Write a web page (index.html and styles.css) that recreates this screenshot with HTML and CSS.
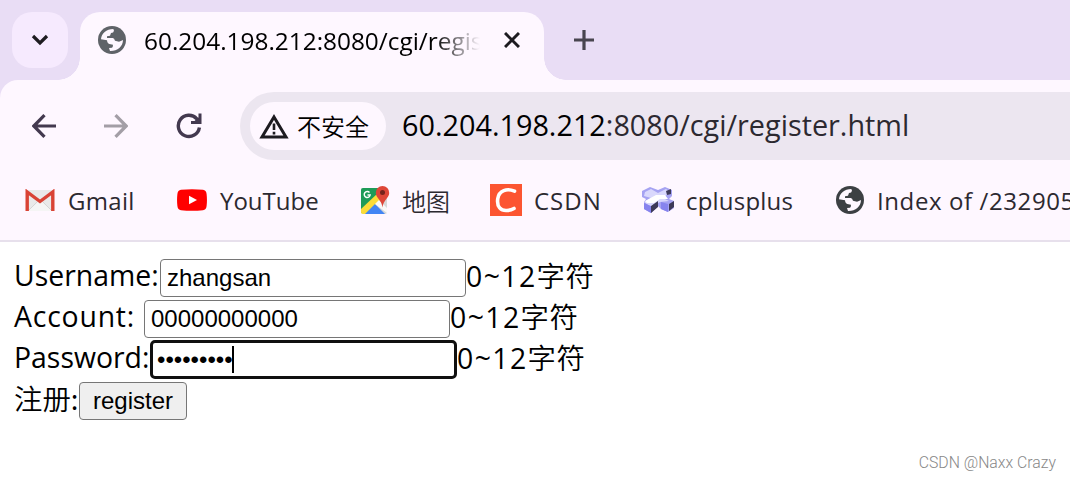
FILE: index.html
```html
<!DOCTYPE html>
<html lang="zh-CN">
<head>
    <meta charset="UTF-8">
    <title>60.204.198.212:8080/cgi/register.html</title>
    <link rel="stylesheet" href="styles.css">
</head>
<body>
    <div class="tab-strip">
        <div class="tab-search">
            <svg width="18" height="12" viewBox="0 0 18 12"><path d="M2 2l7 7 7-7" fill="none" stroke="#1d1b20" stroke-width="3.2"/></svg>
        </div>
        <div class="tab">
            <svg class="globe" width="28" height="28" viewBox="0 0 84 84"><circle cx="42" cy="42" r="42" fill="#5f6368"/><path d="M9 40C10 23 25 9 46 9L48 14Q47 21 39 21L36 29L27 31V36H44Q49 37 51 44L63 47Q68 46 75 42C75 62 57 76 36 75L33 66L42 65Q45 63 45 56L34 54Q28 53 27 43Z" fill="#fef7ff"/></svg>
            <span class="tab-title">60.204.198.212:8080/cgi/regis</span>
            <svg class="tab-close" width="16" height="16" viewBox="0 0 16 16"><path d="M1 1l14 14M15 1L1 15" stroke="#1d1b20" stroke-width="3"/></svg>
        </div>
        <svg class="new-tab" width="20" height="20" viewBox="0 0 20 20"><path d="M10 0v20M0 10h20" stroke="#49454f" stroke-width="3.2"/></svg>
    </div>

    <div class="toolbar">
        <svg class="nav-icon" width="24" height="24" viewBox="0 0 24 24"><path d="M24 12H2M12.5 1.2L1.8 12l10.7 10.8" fill="none" stroke="#43394f" stroke-width="3.2"/></svg>
        <svg class="nav-icon" width="24" height="24" viewBox="0 0 24 24"><path d="M0 12h22M11.5 1.2L22.2 12 11.5 22.8" fill="none" stroke="#a39ea6" stroke-width="3.2"/></svg>
        <svg class="nav-icon" width="26" height="26" viewBox="0 0 26 26"><path d="M23.4 14.5A10.6 10.6 0 1 1 20.8 5.8L22 7" fill="none" stroke="#43394f" stroke-width="3.4"/><path d="M22.500 .5H25.500V11H15V8H18.500L22.500 4.500Z" fill="#43394f"/></svg>
        <div class="address">
            <div class="security">
                <svg width="30" height="25" viewBox="0 0 30 25"><path d="M15 3L27 23H3Z" fill="none" stroke="#1d1b20" stroke-width="3"/><path d="M15 9.5v6.5M15 17.8v2.8" stroke="#1d1b20" stroke-width="2.6"/></svg>
                <span>不安全</span>
            </div>
            <span class="url">60.204.198.212<span class="path">:8080/cgi/register.html</span></span>
        </div>
    </div>

    <div class="bookmarks">
        <div class="bookmark gmail">
            <svg width="30" height="23" viewBox="0 0 30 23"><rect x="2" y="1" width="27" height="21" rx="1.5" fill="#e9e9e9"/><path d="M3 22L15 11l12 11z" fill="#f5f5f5"/><path d="M3 22l9-9M27 22l-9-9" stroke="#ccc" stroke-width=".7"/><path d="M2.2 22V3L15 12.5 27.8 3v19" fill="none" stroke="#d94335" stroke-width="3.4"/></svg>
            <span>Gmail</span>
        </div>
        <div class="bookmark youtube">
            <svg width="30" height="22" viewBox="0 0 30 22"><path d="M4 .8Q15-.4 26 .8Q29.2 1.3 29.6 5Q30.3 11 29.6 17Q29.2 20.7 26 21.2Q15 22.4 4 21.2Q.8 20.7.4 17Q-.3 11 .4 5Q.8 1.3 4 .8Z" fill="#f00"/><path d="M12 6.7l8 4.3-8 4.3z" fill="#fff"/></svg>
            <span>YouTube</span>
        </div>
        <div class="bookmark maps">
            <svg width="30" height="30" viewBox="0 0 30 30"><rect x="1" y="3" width="26" height="26" rx="2" fill="#d7d7d7"/><path d="M3 3h17L16 15 1 28V5q0-2 2-2z" fill="#1e9b58"/><path d="M1 24L18 8l5 6L6 29H3q-2 0-2-2z" fill="#fbdc38"/><path d="M5 29L15 19l10 10z" fill="#4285f4"/><path d="M15 19l4-4 8 8v5z" fill="#f8f8f8"/><path d="M22.5 1a6.7 6.7 0 0 1 6.7 7c0 5-6 7-6.7 14.5C21.8 15 15.8 13 15.8 8a6.7 6.7 0 0 1 6.7-7z" fill="#de4638"/><circle cx="22.5" cy="7.5" r="2.5" fill="#75231c"/><path d="M9.5 7.5A3 3 0 1 0 10.2 10H7.5" fill="none" stroke="#fff" stroke-width="1.4"/></svg>
            <span>地图</span>
        </div>
        <div class="bookmark csdn">
            <svg width="32" height="32" viewBox="0 0 32 32"><path d="M0 0h32v32H0z" fill="#fc5531"/><path d="M24.5 7.2C17 3.8 9 6.5 7.8 14.5C6.5 23 11 27 17 26.5Q21 26.300 24 24.5" fill="none" stroke="#fff" stroke-width="3.6" stroke-linecap="round"/></svg>
            <span>CSDN</span>
        </div>
        <div class="bookmark cplusplus">
            <svg width="32" height="26" viewBox="0 0 32 26"><path d="M0 4L8 0L16 3L23 0L30 3V9L27 12L32 14V21L26 25L19 22L16 19L9 26L2 22V15L4 12L0 10Z" fill="#a5a2f2"/><path d="M3 5L9 2L16 6L24 2L28 5L21 11L27 14L18 15L9 20L2 15L9 11L2 9Z" fill="#d9d8fc"/><path d="M3 14L14 8H23L26 12H18L12 16H5Z" fill="#fff"/><path d="M2 16L9 19V26L2 22ZM19 15L26 17V25L19 22Z" fill="#8784ee"/><path d="M9 19L16 14V20L9 26ZM27 17L32 14V20L27 24ZM24 4L29 2V7L25 8Z" fill="#3d3a58"/></svg>
            <span>cplusplus</span>
        </div>
        <div class="bookmark index">
            <svg width="28" height="28" viewBox="0 0 84 84"><circle cx="42" cy="42" r="42" fill="#3c4043"/><path d="M9 40C10 23 25 9 46 9L48 14Q47 21 39 21L36 29L27 31V36H44Q49 37 51 44L63 47Q68 46 75 42C75 62 57 76 36 75L33 66L42 65Q45 63 45 56L34 54Q28 53 27 43Z" fill="#fef7ff"/></svg>
            <span>Index of /232905</span>
        </div>
    </div>

    <div class="page">
        <div class="row">
            <label class="label-username">Username:</label>
            <input class="field" type="text" value="zhangsan">
            <span class="hint">0~12<span class="cjk">字符</span></span>
        </div>
        <div class="row">
            <label class="label-account">Account:</label>
            <input class="field" type="text" value="00000000000">
            <span class="hint">0~12<span class="cjk">字符</span></span>
        </div>
        <div class="row">
            <label class="label-password">Password:</label>
            <div class="field focused">•••••••••<span class="caret"></span></div>
            <span class="hint">0~12<span class="cjk">字符</span></span>
        </div>
        <div class="row">
            <label class="label-register">注册:</label>
            <button class="register">register</button>
        </div>
        <div class="watermark">CSDN @Naxx Crazy</div>
    </div>
</body>
</html>
```
FILE: styles.css
```css
* {
    box-sizing: border-box;
}
body {
    margin: 0;
    width: 1070px;
    height: 480px;
    overflow: hidden;
    background-color: #e9ddf5;
    font-family: "Open Sans", "Noto Sans CJK SC", sans-serif;
    white-space: nowrap;
}
svg {
    display: block;
    flex-shrink: 0;
}
/* tabs */
.tab-strip {
    display: flex;
    height: 80px;
    padding: 12px 12px 0;
}
.tab-search {
    display: flex;
    align-items: center;
    justify-content: center;
    width: 56px;
    height: 56px;
    border-radius: 20px;
    background-color: #f6eafe;
}
.tab {
    position: relative;
    display: flex;
    align-items: center;
    width: 464px;
    height: 68px;
    margin-left: 12px;
    padding: 0 24px 12px 18px;
    border-radius: 20px 20px 0 0;
    background-color: #fef7ff;
}
.tab::before,
.tab::after {
    content: '';
    position: absolute;
    bottom: 0;
    width: 22px;
    height: 22px;
}
.tab::before {
    left: -22px;
    background: radial-gradient(circle at 0 0, transparent 21.5px, #fef7ff 22px);
}
.tab::after {
    right: -22px;
    background: radial-gradient(circle at 100% 0, transparent 21.5px, #fef7ff 22px);
}
.tab-title {
    width: 342px;
    margin-left: 18px;
    font-size: 24.4px;
    color: #000;
    -webkit-mask-image: linear-gradient(90deg, #000 290px, transparent 336px);
    mask-image: linear-gradient(90deg, #000 290px, transparent 336px);
}
.tab-close {
    margin-left: 18px;
}
.new-tab {
    margin: 18px 0 0 30px;
}
/* toolbar */
.toolbar {
    display: flex;
    align-items: center;
    height: 92px;
    padding-left: 32px;
    border-top-left-radius: 18px;
    background-color: #fef7ff;
}
.nav-icon {
    margin-right: 48px;
}
.address {
    display: flex;
    align-items: center;
    flex: 1;
    height: 68px;
    margin-left: -10px;
    padding-left: 10px;
    border-radius: 34px 0 0 34px;
    background-color: #ece6f0;
}
.security {
    display: flex;
    align-items: center;
    width: 136px;
    height: 48px;
    padding-left: 9px;
    border-radius: 24px;
    background-color: #fef7ff;
    font-family: "Noto Sans CJK SC", sans-serif;
    font-size: 24px;
    font-weight: 350;
    color: #000;
}
.security span {
    margin: 0 0 1px 8px;
}
.url {
    margin: 0 0 3px 16px;
    font-size: 28.8px;
    color: #000;
}
.path {
    color: #2c2930;
}
/* bookmarks */
.bookmarks {
    display: flex;
    align-items: center;
    height: 70px;
    padding: 0 0 12px 25px;
    border-bottom: 2px solid #e7e0ec;
    background-color: #fef7ff;
    font-size: 24px;
    color: #2c2930;
}
.bookmark {
    display: flex;
    align-items: center;
    flex-shrink: 0;
    gap: 12px;
}
.gmail {
    width: 152px;
    gap: 13px;
    letter-spacing: 0.3px;
}
.youtube {
    width: 183px;
    gap: 13px;
}
.maps {
    width: 130px;
    font-weight: 350;
}
.csdn {
    width: 152px;
    letter-spacing: 1px;
}
.cplusplus {
    width: 194px;
    letter-spacing: 0.2px;
}
.index {
    gap: 13px;
    letter-spacing: 0.6px;
}
/* page content */
.page {
    height: 238px;
    padding: 15px 14px;
    background-color: #fff;
}
.row {
    display: flex;
    align-items: center;
    height: 41px;
    font-size: 28.4px;
    color: #000;
}
.row label,
.hint {
    position: relative;
    top: -3px;
}
.hint {
    letter-spacing: 1.4px;
}
.cjk,
.label-register {
    font-family: "Noto Sans CJK SC", sans-serif;
    font-weight: 350;
}
.cjk {
    letter-spacing: 0.5px;
}
.label-username {
    width: 146px;
}
.label-account {
    width: 130px;
    letter-spacing: 0.8px;
}
.label-password {
    width: 136px;
}
.label-register {
    width: 65px;
}
.field {
    width: 306px;
    height: 38px;
    padding: 0 6px;
    border: 1px solid #767676;
    border-radius: 4px;
    background-color: #fff;
    font-family: "Liberation Sans", Arial, sans-serif;
    font-size: 24px;
    color: #000;
}
.focused {
    display: flex;
    align-items: center;
    width: 307px;
    height: 39px;
    padding: 0 4px;
    border: 3px solid #101010;
    border-radius: 5px;
}
.caret {
    width: 2px;
    height: 27px;
    margin-left: -1px;
    background-color: #000;
}
.register {
    width: 108px;
    height: 38px;
    padding: 0;
    border: 1px solid #767676;
    border-radius: 4px;
    background-color: #efefef;
    font-family: "Liberation Sans", Arial, sans-serif;
    font-size: 24px;
    color: #000;
}
.watermark {
    margin-top: 32px;
    text-align: right;
    font-family: Roboto, sans-serif;
    font-size: 15.8px;
    font-weight: 300;
    color: #888;
}
```
